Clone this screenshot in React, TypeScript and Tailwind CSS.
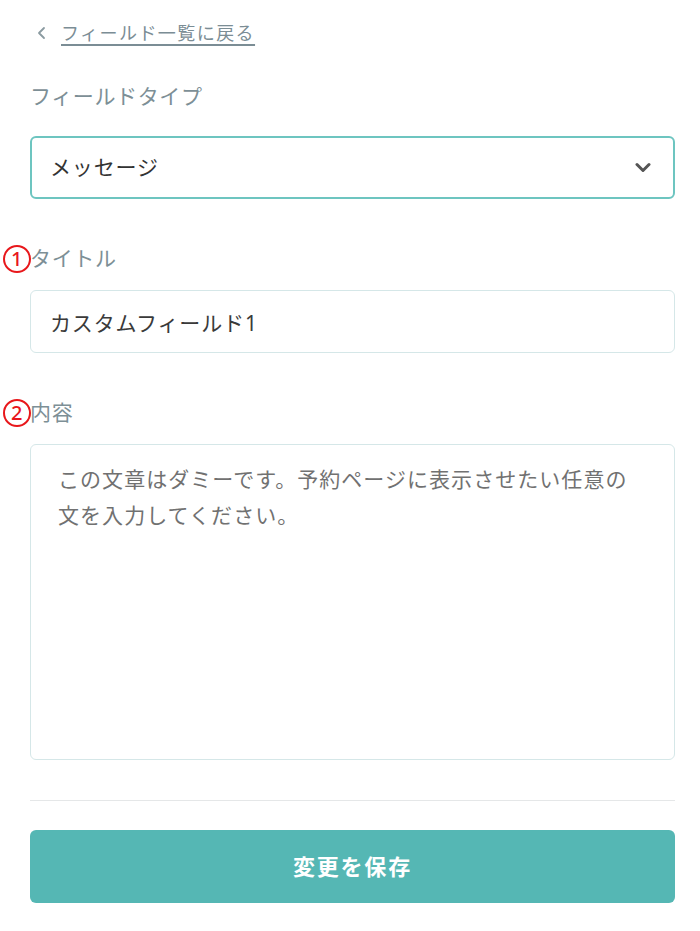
import { useState } from 'react';

const FONT = "font-['Noto_Sans','Noto_Sans_CJK_JP',sans-serif]";

function Marker({ n }: { n: number }) {
  // red circled annotation number, sits just left of the label
  return (
    <span className="absolute left-[-27px] top-1/2 -translate-y-1/2 flex items-center justify-center w-[28px] h-[28px] rounded-full border-2 border-[#e8171b] text-[#e8171b] text-[20px] font-medium leading-none">
      {n}
    </span>
  );
}

function Label({ text, marker }: { text: string; marker?: number }) {
  return (
    <div className="relative h-[30px] flex items-center text-[21px] tracking-[0.03em] text-[#7d8f96]">
      {marker != null && <Marker n={marker} />}
      {text}
    </div>
  );
}

export default function App() {
  const [title, setTitle] = useState('カスタムフィールド1');

  return (
    <div className={`${FONT} bg-white min-h-[931px] pl-[30px] pr-[25px] pt-[20px]`}>
      {/* Back link */}
      <a href="#" className="h-[26px] flex items-center gap-[13px] text-[18px] tracking-[0.08em] text-[#7b8d95]">
        <svg width="12" height="14" viewBox="0 0 12 14" className="ml-[6px]">
          <path d="M8 2 L3 7 L8 12" fill="none" stroke="#8b9ba1" strokeWidth="1.8" strokeLinecap="round" strokeLinejoin="round" />
        </svg>
        <span className="underline underline-offset-[4px] decoration-[1.5px]">フィールド一覧に戻る</span>
      </a>

      {/* Field type */}
      <div className="mt-[36px]">
        <Label text="フィールドタイプ" />
      </div>
      <div className="mt-[24px] h-[63px] flex items-center justify-between rounded-[6px] border-2 border-[#6dc5c0] pl-[18px] pr-[22px]">
        <span className="text-[21px] tracking-[0.04em] text-[#333]">メッセージ</span>
        <svg width="16" height="11" viewBox="0 0 16 11">
          <path d="M2 2.5 L8 8.5 L14 2.5" fill="none" stroke="#555" strokeWidth="3" strokeLinecap="round" strokeLinejoin="round" />
        </svg>
      </div>

      {/* Title */}
      <div className="mt-[45px]">
        <Label text="タイトル" marker={1} />
      </div>
      <input
        value={title}
        onChange={(e) => setTitle(e.target.value)}
        className="mt-[16px] block w-full h-[63px] rounded-[6px] border border-[#d5e7e8] px-[19px] text-[21px] tracking-[0.04em] text-[#3a3a3a] outline-none"
      />

      {/* Content */}
      <div className="mt-[45px]">
        <Label text="内容" marker={2} />
      </div>
      <div className="mt-[16px] h-[316px] rounded-[6px] border border-[#d5e7e8] pl-[27px] pr-[20px] pt-[16px] text-[21px] leading-[36px] tracking-[0.05em] text-[#717171]">
        <div>この文章はダミーです。予約ページに表示させたい任意の</div>
        <div>文を入力してください。</div>
      </div>

      <div className="mt-[40px] border-t border-[#e5e7e8]" />

      <button className="mt-[29px] w-full h-[73px] rounded-[6px] bg-[#55b7b4] text-white text-[22px] font-bold tracking-[0.08em]">
        変更を保存
      </button>
    </div>
  );
}
